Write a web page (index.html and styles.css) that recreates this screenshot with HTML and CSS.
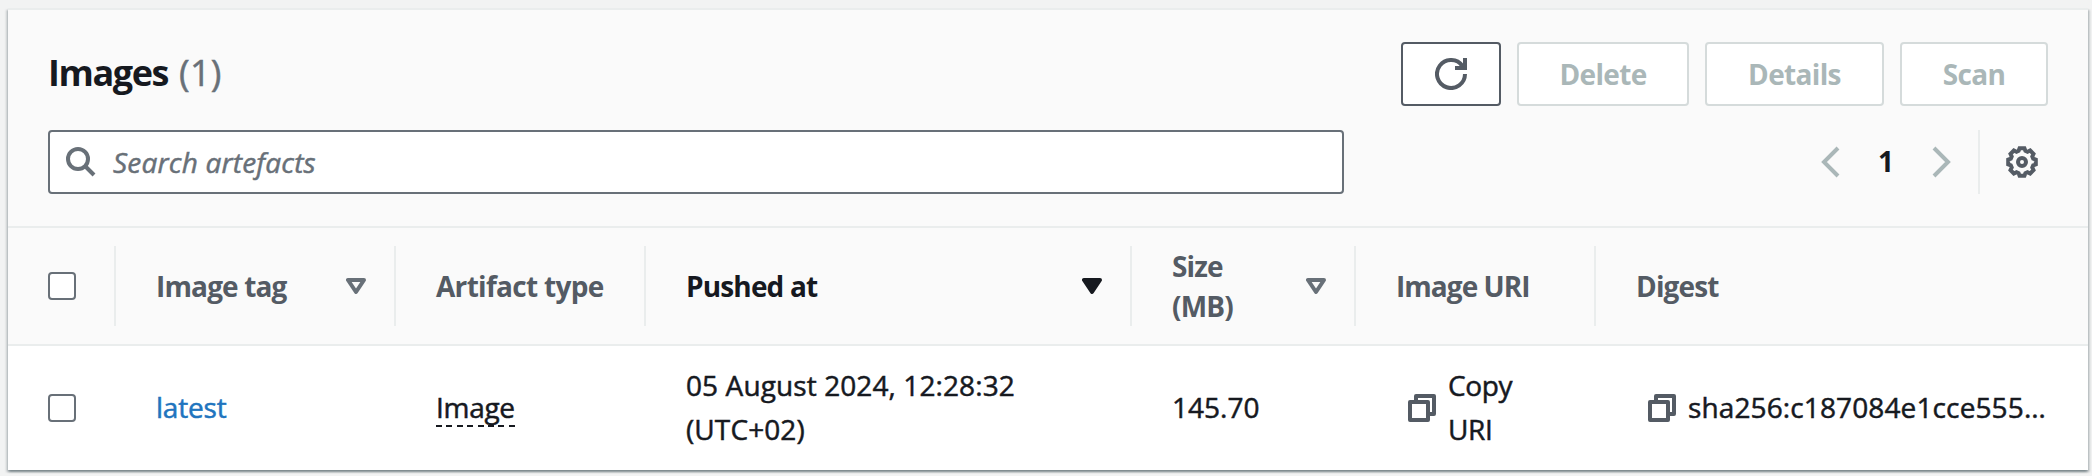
FILE: index.html
```html
<!DOCTYPE html>
<html lang="en">
<head>
<meta charset="utf-8">
<title>Images</title>
<link rel="stylesheet" href="styles.css">
</head>
<body>
<svg class="defs" aria-hidden="true">
  <symbol id="copy" viewBox="0 0 28 28">
    <path d="M8 7V2h18v18h-5" /><path d="M2 8h18v18H2z" />
  </symbol>
  <symbol id="sort" viewBox="0 0 20 17">
    <path d="M2 2h16l-8 12z" />
  </symbol>
</svg>
<main class="card">
  <header class="header">
    <div class="bar">
      <h1 class="title">Images <span class="count">(1)</span></h1>
      <div class="actions">
        <button class="btn btn-icon" aria-label="Refresh">
          <svg class="refresh" viewBox="0 0 32 32"><path class="ring" d="M30 16A14 14 0 1 1 27.500 8" /><path class="arrow" d="M28 0h4v12H20V8h4l4-2z" /></svg>
        </button>
        <button class="btn btn-delete" disabled>Delete</button>
        <button class="btn btn-details" disabled>Details</button>
        <button class="btn btn-scan" disabled>Scan</button>
      </div>
    </div>
    <div class="bar">
      <div class="search">
        <svg class="magnifier" viewBox="0 0 30 30"><circle cx="12" cy="12" r="10" /><path d="M19 19l9 9" /></svg>
        <span class="placeholder">Search artefacts</span>
      </div>
      <div class="paging">
        <svg class="chevron" viewBox="0 0 20 32"><path d="M18 2L4 16l14 14" /></svg>
        <span class="page">1</span>
        <svg class="chevron" viewBox="0 0 20 32"><path d="M2 2l14 14L2 30" /></svg>
        <div class="settings">
          <svg class="gear" viewBox="0 0 32 32"><polygon points="27.2,12.6 29.8,13.6 29.8,18.4 27.2,19.4 26.3,21.5 27.5,24.1 24.1,27.5 21.5,26.3 19.4,27.2 18.4,29.8 13.6,29.8 12.6,27.2 10.5,26.3 7.9,27.5 4.5,24.1 5.7,21.5 4.8,19.4 2.2,18.4 2.2,13.6 4.8,12.6 5.7,10.5 4.5,7.9 7.9,4.5 10.5,5.7 12.6,4.8 13.6,2.2 18.4,2.2 19.4,4.8 21.5,5.7 24.1,4.5 27.5,7.9 26.3,10.5" /><circle cx="16" cy="16" r="4" /></svg>
        </div>
      </div>
    </div>
  </header>
  <div class="row head">
    <div class="cell select"><span class="check"></span></div>
    <div class="cell">Image tag<svg class="sort"><use href="#sort" /></svg></div>
    <div class="cell wide">Artifact type</div>
    <div class="cell active">Pushed at<svg class="sort"><use href="#sort" /></svg></div>
    <div class="cell"><span>Size<br>(MB)</span><svg class="sort"><use href="#sort" /></svg></div>
    <div class="cell tight">Image URI</div>
    <div class="cell">Digest</div>
  </div>
  <div class="row body">
    <div class="cell select"><span class="check"></span></div>
    <div class="cell"><a class="link">latest</a></div>
    <div class="cell"><span class="hint">Image</span></div>
    <div class="cell"><span class="date">05 August 2024, 12:28:32<br>(UTC+02)</span></div>
    <div class="cell">145.70</div>
    <div class="cell copyable"><svg class="copy"><use href="#copy" /></svg><span class="uri">Copy<br>URI</span></div>
    <div class="cell copyable"><svg class="copy"><use href="#copy" /></svg><span class="digest">sha256:c187084e1cce555…</span></div>
  </div>
</main>
</body>
</html>
```
FILE: styles.css
```css
* { box-sizing: border-box; }
body {
  margin: 0;
  height: 476px;
  padding: 8px 4px 6px 8px;
  background: #f2f3f3;
  color: #16191f;
  font: 28px/44px "Open Sans", "Noto Sans", sans-serif;
  overflow: hidden;
}
svg { display: block; flex: none; fill: none; stroke: currentColor; }
.defs { position: absolute; width: 0; height: 0; }
.card {
  height: 462px;
  background: #fff;
  border-top: 2px solid #eaeded;
  box-shadow: 0 2px 2px rgba(0, 28, 36, .3), 2px 2px 2px rgba(0, 28, 36, .15), -2px 2px 2px rgba(0, 28, 36, .15);
}
.header {
  display: flex;
  flex-direction: column;
  gap: 24px;
  height: 218px;
  padding: 32px 40px 0;
  background: #fafafa;
  border-bottom: 2px solid #eaeded;
}
.bar { display: flex; justify-content: space-between; height: 64px; }
.title { margin: 0; padding-top: 6px; font-size: 36px; line-height: 50px; letter-spacing: -1.4px; }
.count { margin-left: 3px; color: #687078; font-weight: 400; letter-spacing: .2px; -webkit-text-stroke: .5px; }
.actions { display: flex; gap: 16px; }
.btn {
  display: flex;
  align-items: center;
  justify-content: center;
  height: 64px;
  padding: 0 0 1px;
  border: 2px solid #d5dbdb;
  border-radius: 4px;
  background: #fff;
  color: #aab7b8;
  font: 700 28px/40px "Open Sans", sans-serif;
  letter-spacing: -.65px;
}
.btn-icon { width: 100px; padding: 0; border-color: #545b64; color: #545b64; }
.btn-delete { width: 172px; }
.btn-details { width: 179px; }
.btn-scan { width: 148px; }
.refresh { width: 32px; height: 32px; }
.ring { stroke-width: 4; }
.arrow { fill: currentColor; stroke: none; }
.search {
  display: flex;
  align-items: center;
  gap: 17px;
  width: 1296px;
  padding-left: 16px;
  background: #fff;
  border: 2px solid #687078;
  border-radius: 4px;
  color: #687078;
}
.magnifier { width: 30px; height: 30px; stroke-width: 4; }
.placeholder { padding-bottom: 1px; font-style: italic; letter-spacing: .2px; -webkit-text-stroke: .5px; }
.paging { display: flex; align-items: center; }
.chevron { width: 20px; height: 32px; color: #aab7b8; stroke-width: 4; }
.page { width: 92px; padding-bottom: 2px; text-align: center; font-weight: 700; }
.settings {
  display: flex;
  align-items: center;
  height: 64px;
  margin-left: 26px;
  padding: 0 10px 0 26px;
  border-left: 2px solid #eaeded;
  color: #545b64;
}
.gear { width: 32px; height: 32px; stroke-width: 4; }
.row {
  display: grid;
  grid-template-columns: 108px 280px 250px 486px 224px 240px 492px;
  align-items: center;
}
.head {
  height: 118px;
  background: #fafafa;
  border-bottom: 2px solid #eaeded;
  color: #545b64;
  font-weight: 700;
  line-height: 40px;
  letter-spacing: -.85px;
}
.body { height: 124px; -webkit-text-stroke: .5px; }
.cell { display: flex; align-items: center; justify-content: space-between; padding: 0 28px 2px 40px; white-space: nowrap; }
.head .cell { height: 80px; border-right: 2px solid #eaeded; padding: 0 28px 1px 40px; }
.head .cell:last-child { border-right: 0; }
.head .wide { letter-spacing: -.7px; }
.head .tight { letter-spacing: -.95px; }
.cell.select, .head .select { padding-bottom: 0; }
.check { width: 28px; height: 28px; border: 2px solid #687078; border-radius: 4px; background: #fff; }
.sort { width: 20px; height: 17px; margin-top: 1px; color: #687078; stroke-width: 4; stroke-linejoin: round; }
.active { color: #16191f; }
.active .sort { color: #16191f; fill: currentColor; }
.link { color: #2074be; letter-spacing: -.2px; }
.date { letter-spacing: .1px; }
.hint {
  height: 40px;
  line-height: 40px;
  letter-spacing: -.3px;
  background: repeating-linear-gradient(90deg, #16191f 0 6px, transparent 6px 10.4px) 0 100% / 100% 2px no-repeat;
}
.copyable { justify-content: flex-start; gap: 12px; padding-left: 52px; padding-right: 0; }
.copy { width: 28px; height: 28px; margin-top: 2px; color: #545b64; stroke-width: 4; stroke-linejoin: round; }
.uri { letter-spacing: -.4px; }
.digest { letter-spacing: .12px; }
```
